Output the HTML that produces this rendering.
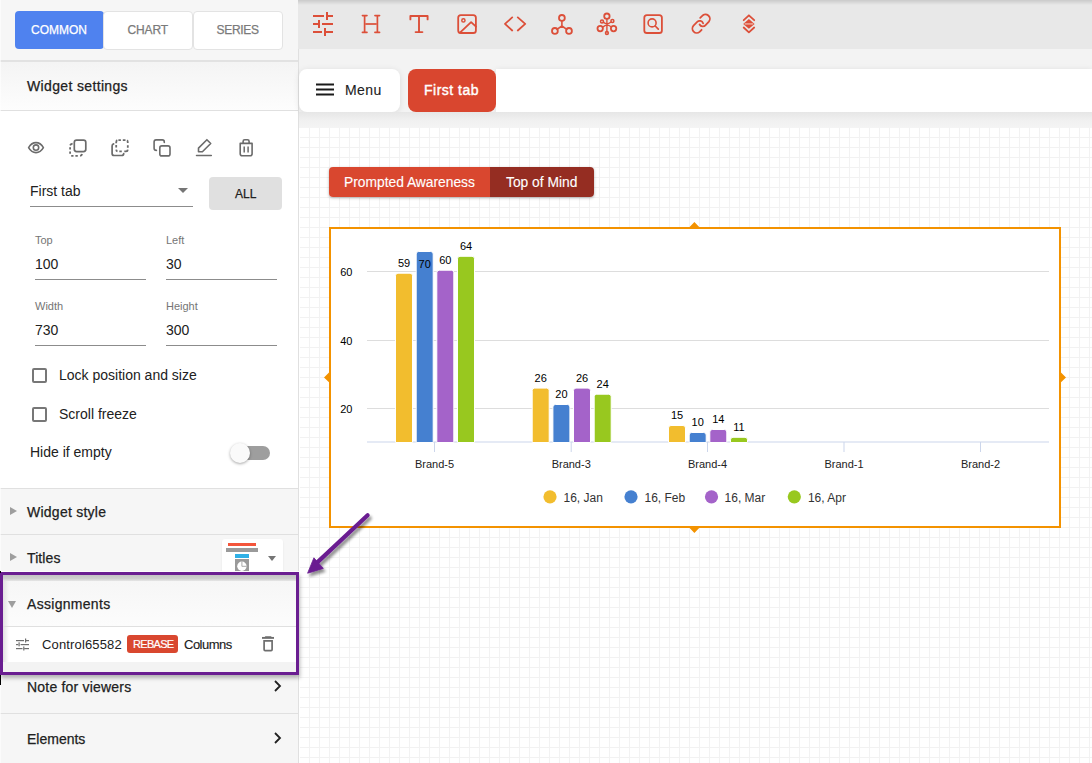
<!DOCTYPE html>
<html><head><meta charset="utf-8">
<style>
*{box-sizing:border-box;margin:0;padding:0}
html,body{width:1092px;height:763px;overflow:hidden;background:#fff;font-family:"Liberation Sans",sans-serif;color:#212121}
.a{position:absolute}
.t{position:absolute;white-space:nowrap;line-height:1}
.hl{position:absolute;height:1px;background:#e0e0e0}
.med{-webkit-text-stroke:0.25px currentColor}
</style></head><body>

<!-- ============ SIDEBAR ============ -->
<div class="a" id="sb" style="left:0;top:0;width:298px;height:763px;background:#f6f6f6">
  <!-- tabs -->
  <div class="a" style="left:15px;top:11px;width:89px;height:38px;background:#4f82ef;border-radius:4px"></div>
  <div class="a" style="left:103px;top:11px;width:90px;height:39px;background:#fff;border:1px solid #e3e3e3;border-radius:4px"></div>
  <div class="a" style="left:193px;top:11px;width:90px;height:39px;background:#fff;border:1px solid #e3e3e3;border-radius:4px"></div>
  <div class="t med" style="left:31px;top:24px;font-size:12px;color:#fff;letter-spacing:0px">COMMON</div>
  <div class="t med" style="left:127.5px;top:24px;font-size:12px;color:#7a7a7a;letter-spacing:-0.15px">CHART</div>
  <div class="t med" style="left:216.5px;top:24px;font-size:12px;color:#7a7a7a;letter-spacing:-0.3px">SERIES</div>
  <div class="a" style="left:0;top:60px;width:298px;height:2px;background:#e2e2e2"></div>

  <!-- widget settings header -->
  <div class="a" style="left:0;top:62px;width:298px;height:48px;background:linear-gradient(#f4f4f4,#fdfdfd)"></div>
  <div class="t med" style="left:27px;top:79px;font-size:14px;color:#212121;letter-spacing:0.35px">Widget settings</div>
  <div class="hl" style="left:0;top:110px;width:298px"></div>

  <!-- white body -->
  <div class="a" style="left:0;top:111px;width:298px;height:377px;background:#fff"></div>
  <svg class="a" style="left:0;top:120px" width="298" height="50" viewBox="0 120 298 50" fill="none" stroke="#6b6b6b" stroke-width="1.6" stroke-linecap="round" stroke-linejoin="round">
    <!-- eye -->
    <path d="M28.6 147.6C30.8 143.8 33.2 142.6 36 142.6S41.2 143.8 43.4 147.6C41.2 151.4 38.8 152.6 36 152.6S30.8 151.4 28.6 147.6Z"/>
    <circle cx="36" cy="147.6" r="2.7"/>
    <!-- flip to front -->
    <rect x="74.3" y="140.1" width="11.5" height="11.5" rx="2.3" stroke-width="1.7"/>
    <path d="M72.6 143.7Q70.6 144 70.1 145.4M70.1 147.2V149.6M70.1 151.6V153.8M71.2 155.8H73.5M75.4 155.8H77.8M80.1 155.8Q81.7 155.6 82.1 154" stroke-width="1.8" stroke-linecap="butt"/>
    <!-- flip to back -->
    <path d="M116.2 143.2V142.2Q116.3 140.6 117.3 140.2M118.4 140.1H120.9M122.8 140.1H125.5M127.1 140.3Q127.8 140.9 127.8 142.9M127.8 145.2V147.7M127.8 149.6Q127.7 151.3 126 151.4H124.3M119.3 151.4H121.8M116.2 149.6Q116.3 151.1 117.5 151.4M116.2 145.1V147.6" stroke-width="1.8" stroke-linecap="butt"/>
    <path d="M113.6 143.9Q112.1 144.2 112.1 146V153.5Q112.1 155.5 114.1 155.5H121.7Q123.6 155.5 123.7 153.6" stroke-width="1.7"/>
    <!-- copy -->
    <path d="M156.4 150.4Q154.1 150.4 154.1 148.2V142Q154.1 139.9 156.1 139.9H162.3Q164.3 139.9 164.3 141.9V142.4"/>
    <rect x="159.8" y="145.9" width="10.2" height="10" rx="2"/>
    <!-- pencil -->
    <path d="M198.5 148.1L206.9 139.7L210.7 143.5L202.4 151.8H198.5Z"/>
    <path d="M196.5 155.5H211.3" stroke-width="1.5"/>
    <!-- trash -->
    <path d="M243.1 143.2V141.4Q243.1 139.8 244.7 139.8H247.5Q249.1 139.8 249.1 141.4V143.2"/>
    <path d="M240.2 143.4H252.1V153.8Q252.1 155.8 250.1 155.8H242.2Q240.2 155.8 240.2 153.8Z"/>
    <path d="M244.2 146.6V152.6M248.1 146.6V152.6" stroke-width="1.5" stroke-linecap="butt"/>
  </svg>

  <!-- dropdown -->
  <div class="t" style="left:30px;top:184px;font-size:14px;color:#212121">First tab</div>
  <div class="a" style="left:30px;top:206px;width:163px;height:1px;background:#8c8c8c"></div>
  <div class="a" style="left:178px;top:188px;width:0;height:0;border-left:5px solid transparent;border-right:5px solid transparent;border-top:5px solid #757575"></div>
  <div class="a" style="left:209px;top:177px;width:73px;height:33px;background:#e0e0e0;border-radius:4px"></div>
  <div class="t med" style="left:235px;top:188px;font-size:12px;color:#212121">ALL</div>

  <!-- fields -->
  <div class="t" style="left:35px;top:235px;font-size:11px;color:#757575">Top</div>
  <div class="t" style="left:35px;top:257px;font-size:14px;color:#212121">100</div>
  <div class="a" style="left:35px;top:279px;width:111px;height:1px;background:#8c8c8c"></div>
  <div class="t" style="left:166px;top:235px;font-size:11px;color:#757575">Left</div>
  <div class="t" style="left:166px;top:257px;font-size:14px;color:#212121">30</div>
  <div class="a" style="left:166px;top:279px;width:111px;height:1px;background:#8c8c8c"></div>

  <div class="t" style="left:35px;top:301px;font-size:11px;color:#757575">Width</div>
  <div class="t" style="left:35px;top:323px;font-size:14px;color:#212121">730</div>
  <div class="a" style="left:35px;top:345px;width:111px;height:1px;background:#8c8c8c"></div>
  <div class="t" style="left:166px;top:301px;font-size:11px;color:#757575">Height</div>
  <div class="t" style="left:166px;top:323px;font-size:14px;color:#212121">300</div>
  <div class="a" style="left:166px;top:345px;width:111px;height:1px;background:#8c8c8c"></div>

  <!-- checkboxes -->
  <div class="a" style="left:32px;top:368px;width:15px;height:15px;border:2px solid #777;border-radius:2px"></div>
  <div class="t" style="left:59px;top:368px;font-size:14px;color:#212121">Lock position and size</div>
  <div class="a" style="left:32px;top:407px;width:15px;height:15px;border:2px solid #777;border-radius:2px"></div>
  <div class="t" style="left:59px;top:407px;font-size:14px;color:#212121">Scroll freeze</div>

  <div class="t" style="left:30px;top:445px;font-size:14px;color:#212121">Hide if empty</div>
  <div class="a" style="left:236px;top:446px;width:34px;height:14px;background:#9e9e9e;border-radius:7px"></div>
  <div class="a" style="left:230px;top:443px;width:20px;height:20px;background:#fafafa;border-radius:50%;box-shadow:0 1px 3px rgba(0,0,0,.35)"></div>

  <div class="hl" style="left:0;top:488px;width:298px"></div>
  <!-- widget style -->
  <div class="a" style="left:10px;top:507px;width:0;height:0;border-top:4.5px solid transparent;border-bottom:4.5px solid transparent;border-left:7px solid #9e9e9e"></div>
  <div class="t med" style="left:27px;top:504.8px;font-size:14px;color:#212121;letter-spacing:0.25px">Widget style</div>
  <div class="hl" style="left:0;top:534px;width:298px"></div>
  <!-- titles -->
  <div class="a" style="left:10px;top:553px;width:0;height:0;border-top:4.5px solid transparent;border-bottom:4.5px solid transparent;border-left:7px solid #9e9e9e"></div>
  <div class="t med" style="left:27px;top:551px;font-size:14px;color:#212121;letter-spacing:0.1px">Titles</div>
  <div class="a" style="left:222px;top:539px;width:61px;height:40px;background:#fff;border-radius:3px;box-shadow:0 1px 2px rgba(0,0,0,.08)"></div>
  <div class="a" style="left:228px;top:543px;width:28px;height:3px;background:#f4553b"></div>
  <div class="a" style="left:226px;top:548px;width:32px;height:4px;background:#9a9a9a"></div>
  <div class="a" style="left:235px;top:554px;width:14px;height:4px;background:#2fb0e6"></div>
  <div class="a" style="left:235px;top:559px;width:14px;height:14px;background:#9a9a9a"></div>
  <svg class="a" style="left:235px;top:559px" width="14" height="14" viewBox="0 0 14 14"><circle cx="6.9" cy="7.3" r="4.7" fill="#fff"/><path d="M6.9 7.3V2.4M6.9 7.3H11.8" stroke="#a0a0a0" stroke-width="0.9" fill="none"/></svg>
  <div class="a" style="left:268px;top:556px;width:0;height:0;border-left:4.5px solid transparent;border-right:4.5px solid transparent;border-top:5px solid #757575"></div>

  <!-- note & elements -->
  <div class="t med" style="left:27px;top:680px;font-size:14px;color:#212121;letter-spacing:0.2px">Note for viewers</div>
  <div class="hl" style="left:0;top:713px;width:298px"></div>
  <div class="t med" style="left:27px;top:732px;font-size:14px;color:#212121;letter-spacing:0px">Elements</div>
  <svg class="a" style="left:270px;top:678px" width="14" height="16" viewBox="0 0 14 16"><path d="M5 3L10 8L5 13" stroke="#212121" stroke-width="1.8" fill="none"/></svg>
  <svg class="a" style="left:270px;top:730px" width="14" height="16" viewBox="0 0 14 16"><path d="M5 3L10 8L5 13" stroke="#212121" stroke-width="1.8" fill="none"/></svg>
</div>
<div class="a" style="left:298px;top:0;width:1px;height:763px;background:#e0e0e0"></div>
<div class="a" style="left:0;top:0;width:1px;height:763px;background:rgba(255,255,255,.6)"></div>

<!-- ============ MAIN ============ -->
<div class="a" style="left:299px;top:0;width:793px;height:763px;background:#fff">
  <!-- toolbar -->
  <div class="a" style="left:-1px;top:0;width:794px;height:49px;background:#e8e8e8"></div>
  <div class="a" style="left:-1px;top:0;width:794px;height:5px;background:linear-gradient(rgba(0,0,0,.13),rgba(0,0,0,0))"></div>
  <svg class="a" style="left:0;top:0" width="500" height="49" viewBox="299 0 500 49">
    <g fill="#dc4f39">
      <rect x="313" y="15" width="11" height="2"/><rect x="326" y="12" width="2" height="8"/><rect x="328" y="15" width="5" height="2"/>
      <rect x="313" y="23" width="6" height="2"/><rect x="318" y="20" width="2" height="8"/><rect x="322" y="23" width="11" height="2"/>
      <rect x="313" y="31" width="9" height="2"/><rect x="324" y="28" width="2" height="8"/><rect x="326" y="31" width="7" height="2"/>
    </g>
    <g fill="none" stroke="#dc4f39" stroke-width="1.8" stroke-linecap="round" stroke-linejoin="round">
      <!-- H -->
      <path d="M364.6 15.5V32.5M377.4 15.5V32.5" stroke-width="1.7" stroke-linecap="butt"/>
      <path d="M362.4 15.6H367M374.9 15.6H379.6M362.4 32.4H367M374.9 32.4H379.6" stroke-width="1.6"/>
      <path d="M365.2 24H376.8" stroke-width="1.9" stroke="#dd5e49" stroke-linecap="butt"/>
      <!-- T -->
      <path d="M410.4 19.4V16H427.6V19.4" stroke-width="1.9"/>
      <path d="M419 16.5V32.2" stroke-width="1.9" stroke-linecap="butt"/>
      <path d="M415.6 32.1H422.4" stroke-width="1.9"/>
      <!-- image -->
      <rect x="458.2" y="15.1" width="17.7" height="17.9" rx="2.6"/>
      <circle cx="463.4" cy="20.4" r="1.6" stroke-width="1.5"/>
      <path d="M460 32.6L471.1 22.1L476 26.6"/>
      <!-- code -->
      <path d="M512.2 17.4L505 23.9L512.2 30.5M517.8 17.4L525.2 23.9L517.8 30.5"/>
      <!-- network 3 -->
      <circle cx="561.9" cy="17.9" r="2.9"/><circle cx="554.9" cy="30.9" r="2.9"/><circle cx="569" cy="30.9" r="2.9"/>
      <path d="M561.9 20.8V26M561.9 26L557 29.4M561.9 26L566.8 29.4" stroke-width="1.6"/>
      <!-- molecule -->
      <circle cx="606.9" cy="16.2" r="2.7"/><circle cx="600.2" cy="28.6" r="2.7"/><circle cx="613.6" cy="28.6" r="2.7"/>
      <circle cx="602" cy="21.4" r="1.5" stroke-width="1.5"/><circle cx="612.4" cy="20.9" r="1.5" stroke-width="1.5"/><circle cx="606.9" cy="33" r="1.4" stroke-width="1.6"/>
      <path d="M606.9 18.9V31.5M603.1 22.2L610.7 26.5M611.1 22L602.6 27.1" stroke-width="1.4"/>
      <!-- search box -->
      <rect x="644.3" y="15.1" width="17.6" height="17.9" rx="2.6"/>
      <circle cx="652.1" cy="22.9" r="4" stroke-width="1.6"/>
      <path d="M655.2 26L658.3 29.1" stroke-width="1.7"/>
      <!-- link -->
      <path d="M700.2 17.9L702.2 15.9A4.4 4.4 0 0 1 708.9 21.6L705.6 25.1A3.6 3.6 0 0 1 699.6 24.5" />
      <path d="M703.1 23.3A3.6 3.6 0 0 0 697.2 21.9L693.5 25.6A4.4 4.4 0 0 0 699.6 31.9L701.6 29.8" />
      <!-- layers -->
      <path d="M743.7 20.2L748.9 15.3L754.2 20.2M743.7 27.5L748.9 32.4L754.2 27.5"/>
    </g>
    <path d="M748.9 19.1L754.6 23.9L748.9 28.8L743.2 23.9Z" fill="#dc4f39"/>
    <path d="M744.6 23.9H753.2" stroke="#eb9b8c" stroke-width="1.8"/>
  </svg>
  <!-- band -->
  <div class="a" style="left:0;top:49px;width:793px;height:78px;background:#f3f3f3"></div>
  <!-- tab bar -->
  <div class="a" style="left:197px;top:69px;width:596px;height:43px;background:#fff;box-shadow:0 1px 6px rgba(0,0,0,.10)"></div>
  <div class="a" style="left:0;top:69px;width:101px;height:43px;background:#fff;border-radius:8px;box-shadow:0 1px 6px rgba(0,0,0,.10)"></div>
  <div class="a" style="left:109px;top:69px;width:88px;height:43px;background:#d9462f;border-radius:8px"></div>
  <svg class="a" style="left:16px;top:82px" width="20" height="16" viewBox="0 0 20 16"><path d="M1 2.6H19M1 7.5H19M1 12.4H19" stroke="#1a1a1a" stroke-width="2"/></svg>
  <div class="t" style="left:46px;top:82.7px;font-size:14px;letter-spacing:0.4px;color:#212121;-webkit-text-stroke:0.1px #212121">Menu</div>
  <div class="t" style="left:125px;top:83px;font-size:14px;letter-spacing:0.5px;color:#fff;-webkit-text-stroke:0.4px #fff">First tab</div>
  <!-- canvas grid -->
  <div class="a" style="left:1px;top:128px;width:792px;height:635px;background-color:#fff;background-image:linear-gradient(to right,#f2f2f2 1px,transparent 1px),linear-gradient(to bottom,#f2f2f2 1px,transparent 1px);background-size:10px 10px;background-position:9px 9px"></div>
  <div class="a" style="left:0;top:112px;width:793px;height:16px;background:linear-gradient(#e6e6e6,#f1f1f1 55%,#f4f4f4)"></div>
  </div>
<!-- chart -->
<div class="a" style="left:329px;top:167px;width:265px;height:30px;border-radius:4px;overflow:hidden;box-shadow:0 1px 3px rgba(0,0,0,.3)">
  <div class="a" style="left:0;top:0;width:161px;height:30px;background:#d9472f"></div>
  <div class="a" style="left:161px;top:0;width:104px;height:30px;background:#952d22"></div>
</div>
<div class="t" style="left:344px;top:176px;font-size:13.8px;color:#fff;-webkit-text-stroke:0.12px #fff">Prompted Awareness</div>
<div class="t" style="left:506px;top:176px;font-size:13.8px;color:#fff;-webkit-text-stroke:0.12px #fff">Top of Mind</div>
<svg class="a" style="left:0;top:0" width="1092" height="763" viewBox="0 0 1092 763">
  <rect x="330" y="228" width="730" height="299" fill="#fff" stroke="#f39200" stroke-width="2"/>
  <path d="M689.6 227L694.4 222L699.2 227ZM689.6 528L694.4 533L699.2 528ZM329 372.6L324 377.4L329 382.2ZM1061 372.6L1066 377.4L1061 382.2Z" fill="#f39200"/>
  <rect x="367" y="271" width="682" height="1" fill="#dddddd"/><rect x="367" y="340" width="682" height="1" fill="#dddddd"/><rect x="367" y="408" width="682" height="1" fill="#dddddd"/>
  <rect x="367" y="441.5" width="682" height="1" fill="#ccd6eb"/>
  <rect x="434.0" y="442" width="1" height="10" fill="#ccd6eb"/><rect x="570.7" y="442" width="1" height="10" fill="#ccd6eb"/><rect x="707.0" y="442" width="1" height="10" fill="#ccd6eb"/><rect x="843.5" y="442" width="1" height="10" fill="#ccd6eb"/><rect x="980.0" y="442" width="1" height="10" fill="#ccd6eb"/>
  <g stroke="#fff" stroke-width="1"><path d="M395.5 442.5V275.7Q395.5 273.2 398.0 273.2H410.0Q412.5 273.2 412.5 275.7V442.5Z" fill="#f2bd2e"/><path d="M416.2 442.5V254.0Q416.2 251.5 418.7 251.5H430.7Q433.2 251.5 433.2 254.0V442.5Z" fill="#4580d0"/><path d="M436.8 442.5V272.7Q436.8 270.2 439.3 270.2H451.3Q453.8 270.2 453.8 272.7V442.5Z" fill="#a463c9"/><path d="M457.5 442.5V258.8Q457.5 256.3 460.0 256.3H472.0Q474.5 256.3 474.5 258.8V442.5Z" fill="#98c81f"/><path d="M532.2 442.5V390.6Q532.2 388.1 534.7 388.1H546.7Q549.2 388.1 549.2 390.6V442.5Z" fill="#f2bd2e"/><path d="M552.9 442.5V407.0Q552.9 404.5 555.4 404.5H567.4Q569.9 404.5 569.9 407.0V442.5Z" fill="#4580d0"/><path d="M573.5 442.5V390.6Q573.5 388.1 576.0 388.1H588.0Q590.5 388.1 590.5 390.6V442.5Z" fill="#a463c9"/><path d="M594.2 442.5V396.7Q594.2 394.2 596.7 394.2H608.7Q611.2 394.2 611.2 396.7V442.5Z" fill="#98c81f"/><path d="M668.5 442.5V428.0Q668.5 425.5 671.0 425.5H683.0Q685.5 425.5 685.5 428.0V442.5Z" fill="#f2bd2e"/><path d="M689.2 442.5V435.0Q689.2 432.5 691.7 432.5H703.7Q706.2 432.5 706.2 435.0V442.5Z" fill="#4580d0"/><path d="M709.8 442.5V432.0Q709.8 429.5 712.3 429.5H724.3Q726.8 429.5 726.8 432.0V442.5Z" fill="#a463c9"/><path d="M730.5 442.5V439.8Q730.5 437.3 733.0 437.3H745.0Q747.5 437.3 747.5 439.8V442.5Z" fill="#98c81f"/></g>
  <g font-family="Liberation Sans" font-size="11" fill="#000" text-anchor="middle"><text x="404.0" y="266.6">59</text><text x="424.7" y="267.8">70</text><text x="445.3" y="263.7">60</text><text x="466.0" y="249.8">64</text><text x="540.7" y="382.0">26</text><text x="561.4" y="398.0">20</text><text x="582.0" y="382.0">26</text><text x="602.7" y="388.0">24</text><text x="677.0" y="419.0">15</text><text x="697.7" y="426.0">10</text><text x="718.3" y="423.0">14</text><text x="739.0" y="431.0">11</text></g>
  <g font-family="Liberation Sans" font-size="11" fill="#000" text-anchor="end"><text x="352.5" y="276">60</text><text x="352.5" y="344.5">40</text><text x="352.5" y="412.5">20</text></g>
  <g font-family="Liberation Sans" font-size="11" fill="#222" text-anchor="middle"><text x="434.5" y="467.8">Brand-5</text><text x="571.2" y="467.8">Brand-3</text><text x="707.5" y="467.8">Brand-4</text><text x="844.0" y="467.8">Brand-1</text><text x="980.5" y="467.8">Brand-2</text></g>
  <g font-family="Liberation Sans" font-size="12" fill="#333"><circle cx="550" cy="496.8" r="6.6" fill="#f2bd2e"/><text x="563.5" y="502">16, Jan</text><circle cx="631" cy="496.8" r="6.6" fill="#4580d0"/><text x="644.5" y="502">16, Feb</text><circle cx="711.5" cy="496.8" r="6.6" fill="#a463c9"/><text x="724.6" y="502">16, Mar</text><circle cx="794.3" cy="496.8" r="6.6" fill="#98c81f"/><text x="807.9" y="502">16, Apr</text></g>
</svg>


<!-- assignments annotation -->
<div class="a" style="left:0;top:571px;width:299px;height:1px;background:#fff"></div>
<div class="a" style="left:0;top:572px;width:299px;height:103px;background:#fff;box-shadow:1px 3px 4px rgba(0,0,0,.28)"></div>
<div class="a" style="left:3px;top:575px;width:293px;height:6px;background:linear-gradient(#c3c3c3,#cfcfcf 60%,#e6e6e6)"></div>
<div class="a" style="left:3px;top:581px;width:293px;height:45px;background:linear-gradient(#f6f6f6,#fcfcfc)"></div>
<div class="a" style="left:3px;top:581px;width:6px;height:81px;background:linear-gradient(to right,#e2e2e2,rgba(255,255,255,0))"></div>
<div class="a" style="left:3px;top:626px;width:293px;height:1px;background:#e0e0e0"></div>
<div class="a" style="left:3px;top:662px;width:293px;height:10px;background:#f3f3f3"></div>
<div class="a" style="left:8px;top:601px;width:0;height:0;border-left:4.5px solid transparent;border-right:4.5px solid transparent;border-top:7.5px solid #9e9e9e"></div>
<div class="t med" style="left:27px;top:597px;font-size:14px;color:#212121;letter-spacing:0.3px">Assignments</div>
<svg class="a" style="left:0;top:630px" width="40" height="30" viewBox="0 630 40 30" fill="#6e6e6e">
  <rect x="16" y="640" width="8" height="1.2"/><rect x="25" y="638.5" width="1.2" height="4"/><rect x="26" y="640" width="3" height="1.2"/>
  <rect x="16" y="644" width="2.3" height="1.2"/><rect x="18.5" y="642.3" width="1.2" height="4"/><rect x="20.6" y="644" width="8.4" height="1.2"/>
  <rect x="16" y="648" width="6.5" height="1.2"/><rect x="23.2" y="646.5" width="1.2" height="4"/><rect x="24.2" y="648" width="4.8" height="1.2"/>
</svg>
<div class="t" style="left:42px;top:637.6px;font-size:13px;letter-spacing:0.15px;color:#212121">Control65582</div>
<div class="a" style="left:127px;top:635px;width:51px;height:18px;background:#d9472f;border-radius:3px"></div>
<div class="t" style="left:133px;top:639px;font-size:11px;letter-spacing:-0.7px;color:#fff;-webkit-text-stroke:0.2px #fff">REBASE</div>
<div class="t" style="left:184px;top:638px;font-size:13px;letter-spacing:-0.5px;color:#212121;-webkit-text-stroke:0.15px #212121">Columns</div>
<svg class="a" style="left:255px;top:630px" width="26" height="26" viewBox="255 630 26 26" fill="none" stroke="#6e6e6e" stroke-width="1.6">
  <path d="M262 637.9H274" stroke-width="1.9"/>
  <path d="M265.6 637H270.8" stroke-width="1.6" stroke-linecap="round"/>
  <path d="M264.1 640.8H272.1V649.6Q272.1 650.6 271.1 650.6H265.1Q264.1 650.6 264.1 649.6Z" stroke-width="1.7"/>
</svg>
<div class="a" style="left:0;top:572px;width:299px;height:103px;border:3px solid #6a1e91"></div>
<div class="a" style="left:0;top:571px;width:1px;height:2px;background:#000"></div>
<div class="a" style="left:0;top:675px;width:1px;height:10px;background:#000"></div>
<!-- arrow -->
<svg class="a" style="left:290px;top:500px;overflow:visible" width="100" height="90" viewBox="290 500 100 90">
  <defs><filter id="sh" x="-30%" y="-30%" width="160%" height="160%"><feGaussianBlur in="SourceAlpha" stdDeviation="1.6"/><feOffset dx="2" dy="3" result="b"/><feComponentTransfer><feFuncA type="linear" slope="0.45"/></feComponentTransfer><feMerge><feMergeNode/><feMergeNode in="SourceGraphic"/></feMerge></filter></defs>
  <g filter="url(#sh)">
    <path d="M367.6 515.3L316 563.6" stroke="#6a1e91" stroke-width="4.2" stroke-linecap="round"/>
    <path d="M307.6 573.2L313.9 557.8L323.3 568.4Z" fill="#6a1e91" stroke="#6a1e91" stroke-width="0.8" stroke-linejoin="round"/>
  </g>
</svg>
</body></html>
